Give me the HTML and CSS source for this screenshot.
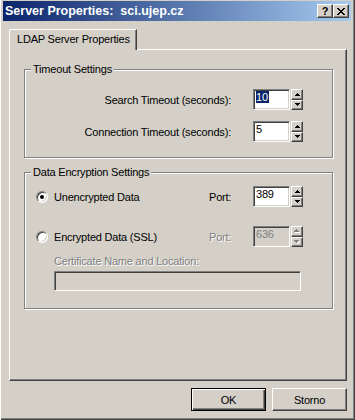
FILE: index.html
```html
<html>
<head>
  <meta charset="utf-8">
  <title>Server Properties</title>
  <link rel="stylesheet" href="styles.css">
</head>
<body>
  <div class="window">
    <div class="titlebar">
      <span class="title">Server Properties:&nbsp; sci.ujep.cz</span>
      <div class="caption-buttons">
        <span class="cap-btn help">?</span>
        <span class="cap-btn close">
          <svg width="8" height="7" viewBox="0 0 8 7"><path d="M0 0h2v1H0zM6 0h2v1H6zM1 1h2v1H1zM5 1h2v1H5zM2 2h4v1H2zM3 3h2v1H3zM2 4h4v1H2zM1 5h2v1H1zM5 5h2v1H5zM0 6h2v1H0zM6 6h2v1H6z" fill="#000"/></svg>
        </span>
      </div>
    </div>

    <div class="tabs">
      <div class="tab">LDAP Server Properties</div>
    </div>

    <div class="panel">
      <fieldset class="group group-timeout">
        <legend>Timeout Settings</legend>
        <div class="row">
          <span class="label">Search Timeout (seconds):</span>
          <div class="spin">
            <div class="edit"><span class="selected">10</span></div>
            <div class="updown">
              <span class="ud"><svg width="5" height="3" viewBox="0 0 5 3"><path d="M2 0h1v1H2zM1 1h3v1H1zM0 2h5v1H0z" fill="#000"/></svg></span>
              <span class="ud"><svg width="5" height="3" viewBox="0 0 5 3"><path d="M0 0h5v1H0zM1 1h3v1H1zM2 2h1v1H2z" fill="#000"/></svg></span>
            </div>
          </div>
        </div>
        <div class="row">
          <span class="label">Connection Timeout (seconds):</span>
          <div class="spin">
            <div class="edit">5</div>
            <div class="updown">
              <span class="ud"><svg width="5" height="3" viewBox="0 0 5 3"><path d="M2 0h1v1H2zM1 1h3v1H1zM0 2h5v1H0z" fill="#000"/></svg></span>
              <span class="ud"><svg width="5" height="3" viewBox="0 0 5 3"><path d="M0 0h5v1H0zM1 1h3v1H1zM2 2h1v1H2z" fill="#000"/></svg></span>
            </div>
          </div>
        </div>
      </fieldset>

      <fieldset class="group group-encryption">
        <legend>Data Encryption Settings</legend>
        <div class="option-row">
          <span class="radio checked"><span class="dot"></span></span>
          <span class="option-label">Unencrypted Data</span>
          <span class="port-label">Port:</span>
          <div class="spin">
            <div class="edit">389</div>
            <div class="updown">
              <span class="ud"><svg width="5" height="3" viewBox="0 0 5 3"><path d="M2 0h1v1H2zM1 1h3v1H1zM0 2h5v1H0z" fill="#000"/></svg></span>
              <span class="ud"><svg width="5" height="3" viewBox="0 0 5 3"><path d="M0 0h5v1H0zM1 1h3v1H1zM2 2h1v1H2z" fill="#000"/></svg></span>
            </div>
          </div>
        </div>
        <div class="option-row second">
          <span class="radio"></span>
          <span class="option-label">Encrypted Data (SSL)</span>
          <span class="port-label disabled">Port:</span>
          <div class="spin">
            <div class="edit disabled">636</div>
            <div class="updown">
              <span class="ud"><svg width="6" height="4" viewBox="0 0 6 4"><path d="M3 1h1v1H3zM2 2h3v1H2zM1 3h5v1H1z" fill="#fff"/><path d="M2 0h1v1H2zM1 1h3v1H1zM0 2h5v1H0z" fill="#808080"/></svg></span>
              <span class="ud"><svg width="6" height="4" viewBox="0 0 6 4"><path d="M1 1h5v1H1zM2 2h3v1H2zM3 3h1v1H3z" fill="#fff"/><path d="M0 0h5v1H0zM1 1h3v1H1zM2 2h1v1H2z" fill="#808080"/></svg></span>
            </div>
          </div>
        </div>
        <div class="cert">
          <div class="cert-label disabled">Certificate Name and Location:</div>
          <div class="edit disabled cert-edit"></div>
        </div>
      </fieldset>
    </div>

    <div class="buttons">
      <button class="btn default">OK</button>
      <button class="btn">Storno</button>
    </div>
  </div>
</body>
</html>
```

FILE: styles.css
```css
* { box-sizing: border-box; }
body {
  margin: 0;
  font-family: "Liberation Sans", Arial, sans-serif;
  font-size: 11px;
  letter-spacing: -0.2px;
  color: #000;
}
.window {
  width: 355px;
  height: 420px;
  background: #d4d0c8;
  padding: 1px 4px 0 3px;
  box-shadow: inset 1px 0 0 #fff, inset -1px -1px 0 #404040, inset -2px -2px 0 #808080;
}

/* caption */
.titlebar {
  height: 20px;
  display: flex;
  align-items: center;
  justify-content: space-between;
  padding: 0 2px 0 2px;
  background: linear-gradient(to right, #0a246a, #a6caf0);
}
.title {
  color: #fff;
  font-weight: bold;
  font-size: 12.5px;
  letter-spacing: 0;
}
.caption-buttons { display: flex; }
.cap-btn {
  width: 16px;
  height: 14px;
  display: flex;
  align-items: center;
  justify-content: center;
  background: #d4d0c8;
  border: 1px solid;
  border-color: #fff #404040 #404040 #fff;
  box-shadow: inset -1px -1px 0 #808080;
}
.help { font-weight: bold; font-size: 11px; line-height: 12px; }

/* tab control */
.tabs {
  display: flex;
  margin: 8px 4px 0 6px;
}
.tab {
  position: relative;
  z-index: 1;
  width: 128px;
  height: 21px;
  margin-bottom: -1px;
  padding: 3px 0 0 7px;
  line-height: 13px;
  background: #d4d0c8;
  border-top: 1px solid #fff;
  border-left: 1px solid #fff;
  border-right: 1px solid #404040;
  border-top-left-radius: 2px;
  box-shadow: inset -1px 0 0 #808080;
}
.panel {
  height: 332px;
  margin: 0 4px 0 6px;
  padding: 13px 0 0 14px;
  border: 1px solid;
  border-color: #fff #404040 #404040 #fff;
  box-shadow: inset -1px -1px 0 #808080;
}

/* group boxes */
.group {
  width: 309px;
  margin: 0;
  padding: 0;
  border: 1px solid #808080;
  box-shadow: inset 1px 1px 0 #fff, 1px 1px 0 #fff;
  min-inline-size: 0;
}
.group legend {
  margin-left: 6px;
  padding: 0 2px;
  line-height: 13px;
  background: #d4d0c8;
}
.group-timeout { padding: 13px 29px 15px 0; }
.group-encryption { margin-top: 8px; padding: 7px 29px 17px 0; }

.row {
  display: flex;
  justify-content: flex-end;
  align-items: center;
  height: 21px;
}
.row + .row { margin-top: 11px; }
.row .label { margin-right: 22px; }

/* spin edit */
.spin { display: flex; height: 21px; }
.edit {
  width: 37px;
  height: 21px;
  padding: 1px 0 0 2px;
  line-height: 13px;
  background: #fff;
  border: 1px solid;
  border-color: #808080 #fff #fff #808080;
  box-shadow: inset 1px 1px 0 #404040, inset -1px -1px 0 #d4d0c8;
}
.edit .selected {
  background: #0a246a;
  color: #fff;
  padding-right: 1px;
}
.edit.disabled { background: #d4d0c8; color: #808080; }
.updown {
  display: flex;
  flex-direction: column;
  width: 12px;
  margin-left: 1px;
}
.ud {
  flex: 1;
  display: flex;
  align-items: center;
  justify-content: center;
  border: 1px solid;
  border-color: #fff #404040 #404040 #fff;
  box-shadow: inset -1px -1px 0 #808080;
}
.ud svg { display: block; }

/* radio rows */
.option-row {
  display: flex;
  align-items: center;
  height: 21px;
  padding-left: 11px;
}
.option-row.second { margin-top: 19px; }
.radio {
  width: 12px;
  height: 12px;
  margin-right: 6px;
  border-radius: 50%;
  background: #fff;
  border: 1px solid;
  border-color: #808080 #fff #fff #808080;
  box-shadow: inset 1px 1px 0 #404040, inset -1px -1px 0 #d4d0c8;
  display: flex;
  align-items: center;
  justify-content: center;
}
.radio .dot {
  width: 4px;
  height: 4px;
  border-radius: 50%;
  background: #000;
}
.option-label { flex: 1; }
.port-label { width: 44px; }
.disabled { color: #808080; text-shadow: 1px 1px 0 #fff; }
.edit.disabled { text-shadow: none; }

.cert { padding-left: 29px; }
.cert-label { margin-top: 8px; line-height: 13px; }
.cert-edit { width: 247px; height: 20px; margin-top: 3px; }

/* dialog buttons */
.buttons {
  display: flex;
  justify-content: flex-end;
  gap: 6px;
  margin: 7px 4px 0 0;
}
.btn {
  width: 75px;
  height: 23px;
  padding: 0;
  font-family: inherit;
  font-size: 11px;
  letter-spacing: -0.2px;
  color: #000;
  background: #d4d0c8;
  border: 1px solid;
  border-color: #fff #404040 #404040 #fff;
  box-shadow: inset -1px -1px 0 #808080;
}
.btn.default {
  border-color: #000;
  box-shadow: inset 1px 1px 0 #fff, inset -1px -1px 0 #404040, inset -2px -2px 0 #808080;
}
```
